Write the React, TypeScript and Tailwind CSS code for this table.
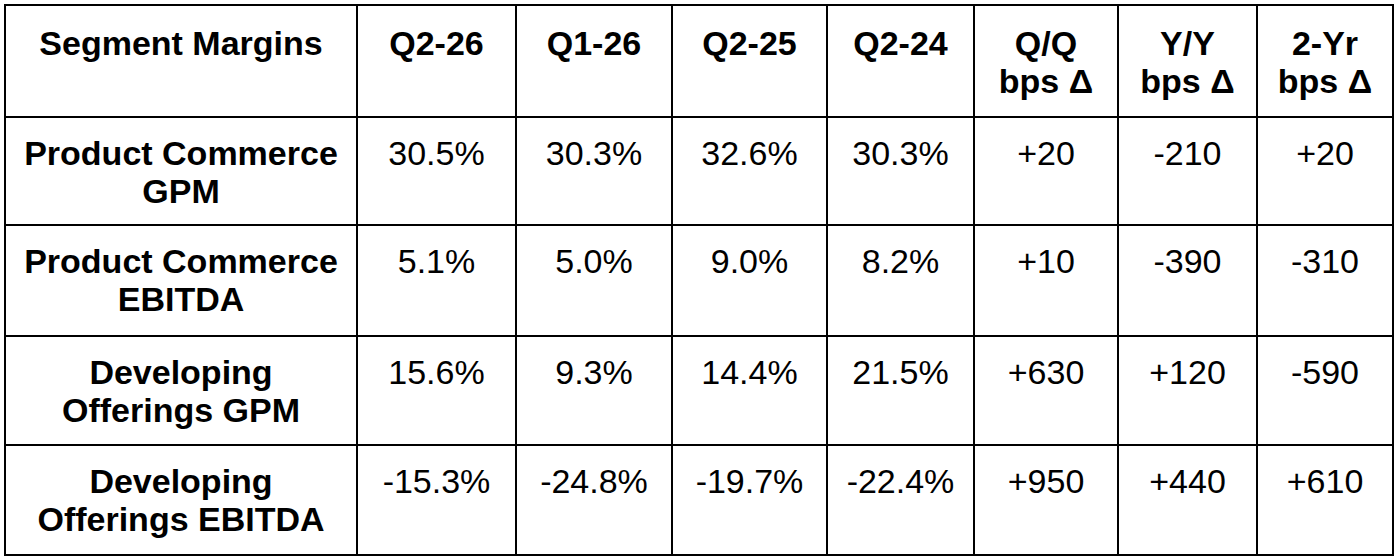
const columns = [
  { label: ["Segment Margins"], width: "w-[352px]" },
  { label: ["Q2-26"], width: "w-[159px]" },
  { label: ["Q1-26"], width: "w-[156px]" },
  { label: ["Q2-25"], width: "w-[155px]" },
  { label: ["Q2-24"], width: "w-[147px]" },
  { label: ["Q/Q", "bps Δ"], width: "w-[144px]" },
  { label: ["Y/Y", "bps Δ"], width: "w-[139px]" },
  { label: ["2-Yr", "bps Δ"], width: "w-[136px]" },
];

// bottom padding per row, so the rules land where the sheet has them
const rows = [
  {
    name: ["Product Commerce", "GPM"],
    values: ["30.5%", "30.3%", "32.6%", "30.3%", "+20", "-210", "+20"],
    pb: "pb-[14px]",
  },
  {
    name: ["Product Commerce", "EBITDA"],
    values: ["5.1%", "5.0%", "9.0%", "8.2%", "+10", "-390", "-310"],
    pb: "pb-[17px]",
  },
  {
    name: ["Developing", "Offerings GPM"],
    values: ["15.6%", "9.3%", "14.4%", "21.5%", "+630", "+120", "-590"],
    pb: "pb-[15px]",
  },
  {
    name: ["Developing", "Offerings EBITDA"],
    values: ["-15.3%", "-24.8%", "-19.7%", "-22.4%", "+950", "+440", "+610"],
    pb: "pb-4",
  },
];

const cell = "border-2 border-black align-top text-center px-2 leading-[38px]";

const Lines = ({ lines }: { lines: string[] }) => (
  <>
    {lines.map((line, i) => (
      <span key={i} className="block whitespace-nowrap">
        {line}
      </span>
    ))}
  </>
);

export default function App() {
  return (
    <div className="w-[1400px] h-[560px] bg-white pt-1 pl-1 font-['Liberation_Sans',Arial,sans-serif] text-black text-[34px]">
      <table className="table-fixed border-collapse w-[1390px]">
        <colgroup>
          {columns.map((c, i) => (
            <col key={i} className={c.width} />
          ))}
        </colgroup>
        <thead>
          <tr>
            {columns.map((c, i) => (
              <th key={i} className={`${cell} pt-[18px] pb-4 font-bold`}>
                <Lines lines={c.label} />
              </th>
            ))}
          </tr>
        </thead>
        <tbody>
          {rows.map((r, i) => (
            <tr key={i}>
              <td className={`${cell} pt-4 ${r.pb} font-bold`}>
                <Lines lines={r.name} />
              </td>
              {r.values.map((v, j) => (
                <td key={j} className={`${cell} pt-4 ${r.pb}`}>
                  {v}
                </td>
              ))}
            </tr>
          ))}
        </tbody>
      </table>
    </div>
  );
}
